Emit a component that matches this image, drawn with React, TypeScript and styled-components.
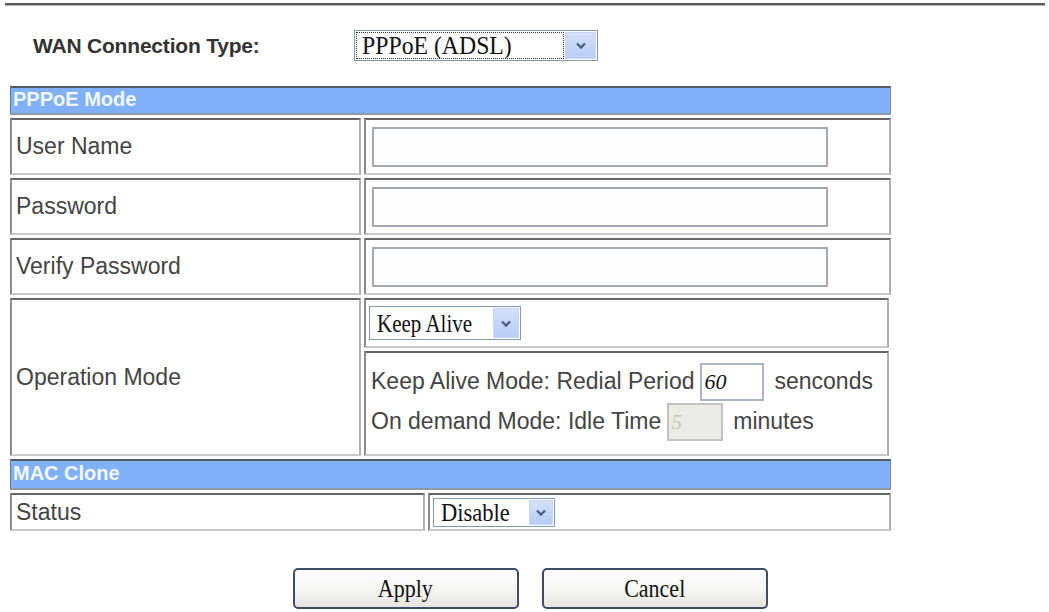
import styled, { createGlobalStyle } from "styled-components";

const GlobalStyle = createGlobalStyle`
    html, body {
        margin: 0;
        padding: 0;
        background: #fff;
    }
    body {
        font-family: "Liberation Sans", Arial, sans-serif;
        color: #3c3c3c;
    }
`

const Chevron = () => (
    <svg width="12" height="9" viewBox="0 0 12 9">
        <polyline points="2,2.5 6,6.5 10,2.5" fill="none" stroke="#4a5e8c" strokeWidth="2.4" />
    </svg>
)

type SelectProps = {
    value: string;
    width: number;
    height: number;
    arrow: number;
    stretch?: number;
    focused?: boolean;
}

const Select = ({ value, width, height, arrow, stretch = 0.88, focused }: SelectProps) => (
    <SelectBox $w={width} $h={height}>
        <SelectValue $focused={focused}>
            <SerifText $stretch={stretch}>{value}</SerifText>
        </SelectValue>
        <SelectArrow $w={arrow}>
            <Chevron />
        </SelectArrow>
    </SelectBox>
)

const App = () => {
    return (
        <Page>
            <GlobalStyle />
            <Rule />
            <TypeRow>
                <TypeLabel>WAN Connection Type:</TypeLabel>
                <Select value="PPPoE (ADSL)" width={244} height={31} arrow={31} stretch={0.95} focused />
            </TypeRow>

            <FormTable>
                <SectionHeader>PPPoE Mode</SectionHeader>
                <Row $label={351}>
                    <LabelCell>User Name</LabelCell>
                    <ValueCell><TextInput /></ValueCell>
                </Row>
                <Row $label={351}>
                    <LabelCell>Password</LabelCell>
                    <ValueCell><TextInput type="password" /></ValueCell>
                </Row>
                <Row $label={351}>
                    <LabelCell>Verify Password</LabelCell>
                    <ValueCell><TextInput type="password" /></ValueCell>
                </Row>
                <Row $label={351}>
                    <LabelCell>Operation Mode</LabelCell>
                    <NestedCell>
                        <SubCell $h={50}>
                            <Select value="Keep Alive" width={152} height={34} arrow={26} stretch={0.84} />
                        </SubCell>
                        <SubCell $h={105}>
                            <ModeLines>
                                <ModeLine>
                                    Keep Alive Mode: Redial Period
                                    <SmallInput $w={64} defaultValue="60" />
                                    <Unit>senconds</Unit>
                                </ModeLine>
                                <ModeLine>
                                    On demand Mode: Idle Time
                                    <SmallInput $w={56} defaultValue="5" disabled />
                                    <Unit>minutes</Unit>
                                </ModeLine>
                            </ModeLines>
                        </SubCell>
                    </NestedCell>
                </Row>

                <SectionHeader $h={31}>MAC Clone</SectionHeader>
                <Row $label={415}>
                    <LabelCell $h={38}>Status</LabelCell>
                    <ValueCell $h={38} $pad={3}>
                        <Select value="Disable" width={122} height={29} arrow={24} stretch={0.9} />
                    </ValueCell>
                </Row>
            </FormTable>

            <ButtonBar>
                <ActionButton><SerifText $stretch={0.88} $center>Apply</SerifText></ActionButton>
                <ActionButton><SerifText $stretch={0.88} $center>Cancel</SerifText></ActionButton>
            </ButtonBar>
        </Page>
    )
}

export const Page = styled.div`
    width: 1049px;
    height: 612px;
    padding: 3px 4px 0 5px;
    box-sizing: border-box;
    overflow: hidden;
`

export const Rule = styled.div`
    height: 2px;
    background: #5a5a5a;
    border-bottom: 1px solid #b4b4b4;
`

export const TypeRow = styled.div`
    display: flex;
    align-items: center;
    margin-top: 24px;
    padding-left: 28px;
    height: 31px;
`

export const TypeLabel = styled.span`
    width: 321px;
    font-size: 21px;
    font-weight: 700;
    color: #333;
    letter-spacing: -0.2px;
`

export const SerifText = styled.span<{ $stretch: number; $center?: boolean }>`
    display: inline-block;
    font-family: "Liberation Serif", "Times New Roman", serif;
    font-size: 25px;
    line-height: 1;
    color: #111;
    white-space: nowrap;
    transform: scaleX(${p => p.$stretch});
    transform-origin: ${p => (p.$center ? "center" : "left")} center;
`

export const SelectBox = styled.div<{ $w: number; $h: number }>`
    display: inline-flex;
    align-items: stretch;
    width: ${p => p.$w}px;
    height: ${p => p.$h}px;
    box-sizing: border-box;
    border: 1px solid #7f9db9;
    background: #fff;
    padding: 1px;
    gap: 1px;
`

export const SelectValue = styled.div<{ $focused?: boolean }>`
    flex: 1;
    display: flex;
    align-items: center;
    padding-left: 5px;
    overflow: hidden;
    border: 1px ${p => (p.$focused ? "dotted #333" : "solid transparent")};
`

export const SelectArrow = styled.div<{ $w: number }>`
    width: ${p => p.$w}px;
    display: flex;
    align-items: center;
    justify-content: center;
    background: linear-gradient(#d3e0fb, #b8ccf6);
    border: 1px solid #c6d5f8;
    box-sizing: border-box;
`

export const FormTable = styled.div`
    display: flex;
    flex-direction: column;
    gap: 3px;
    width: 881px;
    margin-top: 25px;
    margin-left: 5px;
`

export const SectionHeader = styled.div<{ $h?: number }>`
    height: ${p => p.$h ?? 29}px;
    box-sizing: border-box;
    display: flex;
    align-items: center;
    padding: 0 0 3px 2px;
    background: #80b1f8;
    border-style: solid;
    border-width: 2px 1px 2px 1px;
    border-color: #555c66 #7e8da3 #8f9aa8 #6d7a90;
    color: #f3f8ff;
    font-size: 20px;
    font-weight: 700;
`

export const Row = styled.div<{ $label: number }>`
    display: grid;
    grid-template-columns: ${p => p.$label}px 1fr;
    gap: 3px;
`

const cellBorder = `
    border-style: solid;
    border-width: 2px;
    border-color: #666 #b0b0b0 #c9c9c9 #8c8c8c;
    box-sizing: border-box;
`

export const LabelCell = styled.div<{ $h?: number }>`
    ${cellBorder}
    min-height: ${p => p.$h ?? 57}px;
    display: flex;
    align-items: center;
    padding-left: 4px;
    font-size: 23px;
    color: #444;
`

export const ValueCell = styled.div<{ $h?: number; $pad?: number }>`
    ${cellBorder}
    min-height: ${p => p.$h ?? 57}px;
    display: flex;
    align-items: center;
    padding-left: ${p => p.$pad ?? 6}px;
`

export const TextInput = styled.input`
    width: 456px;
    height: 40px;
    box-sizing: border-box;
    border: 2px solid #a3a8b0;
    background: #fdfeff;
    outline: none;
`

export const NestedCell = styled.div`
    display: flex;
    flex-direction: column;
    gap: 3px;
`

export const SubCell = styled.div<{ $h: number }>`
    ${cellBorder}
    height: ${p => p.$h}px;
    display: flex;
    align-items: center;
    padding-left: 3px;
    margin-right: 2px;
`

export const ModeLines = styled.div`
    display: flex;
    flex-direction: column;
    gap: 2px;
    padding-left: 2px;
    margin-top: -4px;
`

export const ModeLine = styled.div`
    display: flex;
    align-items: center;
    height: 38px;
    font-size: 23px;
    color: #444;
    white-space: nowrap;
`

export const SmallInput = styled.input<{ $w: number }>`
    width: ${p => p.$w}px;
    height: 38px;
    margin-left: 6px;
    box-sizing: border-box;
    border: 2px solid #a9b4c4;
    background: #fff;
    padding: 0 2px;
    font-family: "Liberation Serif", "Times New Roman", serif;
    font-style: italic;
    font-size: 22px;
    color: #111;
    outline: none;

    &:disabled {
        background: #ebebe6;
        border-color: #c2c2c2;
        color: #c8c8bc;
    }
`

export const Unit = styled.span`
    margin-left: 10px;
`

export const ButtonBar = styled.div`
    display: flex;
    justify-content: center;
    gap: 23px;
    margin-top: 37px;
    padding-left: 10px;
`

export const ActionButton = styled.button`
    width: 226px;
    height: 41px;
    border: 2px solid #3d4f68;
    border-radius: 5px;
    background: linear-gradient(#ffffff, #f4f4f0 60%, #e4e3dc);
    display: flex;
    align-items: center;
    justify-content: center;
    padding: 0;
    cursor: pointer;
`

export default App;
